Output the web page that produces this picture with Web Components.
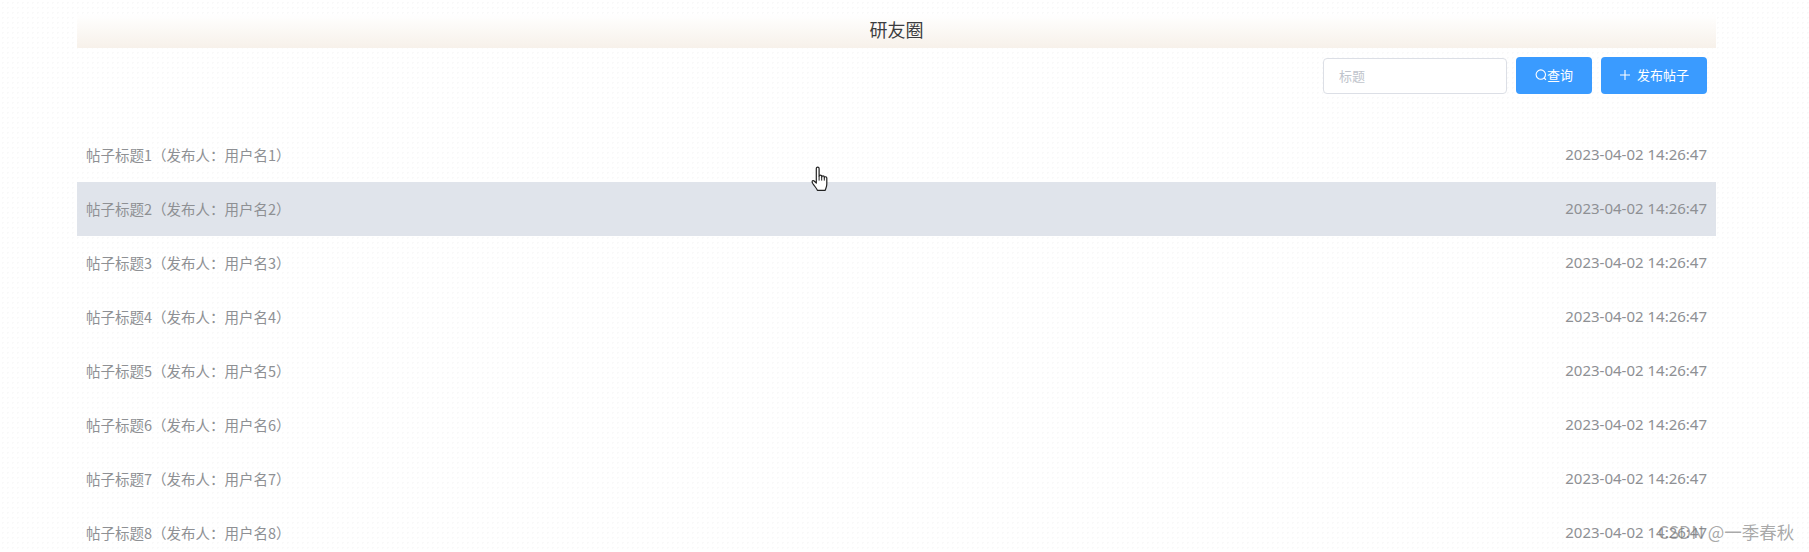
<!DOCTYPE html>
<html lang="zh">
<head>
<meta charset="utf-8">
<title>研友圈</title>
<style>
  html, body { margin: 0; height: 552px; overflow: hidden; background: #fff; }
  body { font-family: "Noto Sans CJK SC", "Liberation Sans", sans-serif; }
</style>
</head>
<body>
<forum-page>
  <forum-header>研友圈</forum-header>
  <forum-toolbar placeholder="标题"></forum-toolbar>
  <post-list></post-list>
</forum-page>
<hand-cursor></hand-cursor>
<water-mark>CSDN @一季春秋</water-mark>

<script>
class ForumPage extends HTMLElement {
  constructor() {
    super();
    this.attachShadow({ mode: 'open' });
    this.shadowRoot.innerHTML = `
      <style>
        :host {
          display: block;
          height: 552px;
          box-sizing: border-box;
          padding: 14px 93px 0 77px;
          overflow: hidden;
          background-color: #fff;
          background-image: radial-gradient(circle, #f9f9f9 1px, transparent 1px);
          background-size: 5px 5px;
        }
      </style>
      <slot></slot>
    `;
  }
}

class ForumHeader extends HTMLElement {
  constructor() {
    super();
    this.attachShadow({ mode: 'open' });
    this.shadowRoot.innerHTML = `
      <style>
        :host {
          display: flex;
          justify-content: center;
          align-items: center;
          height: 34px;
          padding-bottom: 4px;
          box-sizing: border-box;
          font-size: 18px;
          color: #3c3d40;
          background: linear-gradient(to bottom, #fff, #f7f1ea);
        }
      </style>
      <slot></slot>
    `;
  }
}

class ForumToolbar extends HTMLElement {
  constructor() {
    super();
    this.attachShadow({ mode: 'open' });
    this.shadowRoot.innerHTML = `
      <style>
        :host {
          display: flex;
          justify-content: flex-end;
          align-items: center;
          gap: 9px;
          height: 37px;
          margin-top: 9px;
          padding-right: 9px;
        }
        input {
          width: 184px;
          height: 36px;
          box-sizing: border-box;
          padding: 0 15px;
          border: 1px solid #dcdfe6;
          border-radius: 4px;
          background: #fff;
          font: 13px "Noto Sans CJK SC", sans-serif;
          outline: none;
        }
        input::placeholder { color: #c0c4cc; }
        button {
          display: flex;
          justify-content: center;
          align-items: center;
          height: 37px;
          padding: 0 0 2px;
          border: 0;
          border-radius: 4px;
          background: #3a9bff;
          color: #fff;
          font: 13px "Noto Sans CJK SC", sans-serif;
        }
        #search { width: 76px; gap: 0; }
        #add { width: 106px; gap: 6px; }
        svg { display: block; }
      </style>
      <input id="title" type="text">
      <button id="search">
        <svg width="12" height="12" viewBox="0 0 12 12" fill="none" stroke="#fff" stroke-width="1.1">
          <circle cx="5.8" cy="5.6" r="4.7"/>
          <path d="M9.2 9l1.8 1.9"/>
        </svg>
        <span>查询</span>
      </button>
      <button id="add">
        <svg width="12" height="12" viewBox="0 0 12 12" fill="none" stroke="#fff" stroke-width="1.1">
          <path d="M6 1v10M1 6h10"/>
        </svg>
        <span>发布帖子</span>
      </button>
    `;
    this.shadowRoot.getElementById('title').placeholder = this.getAttribute('placeholder');
  }
}

class PostRow extends HTMLElement {
  constructor() {
    super();
    this.attachShadow({ mode: 'open' });
    this.shadowRoot.innerHTML = `
      <style>
        :host {
          display: flex;
          justify-content: space-between;
          align-items: center;
          height: 54px;
          padding: 0 9px 2px;
          box-sizing: border-box;
          font-size: 14.5px;
          color: #8e9094;
        }
        :host([active]) { background: #e0e4eb; }
        .time { font: 15px "Noto Sans", sans-serif; }
      </style>
      <span><slot name="title"></slot></span>
      <span class="time"><slot name="time"></slot></span>
    `;
  }
}

class PostList extends HTMLElement {
  constructor() {
    super();
    this.attachShadow({ mode: 'open' });
    this.shadowRoot.innerHTML = `
      <style>
        :host { display: block; margin-top: 34px; }
      </style>
      <slot></slot>
    `;
  }

  connectedCallback() {
    for (let i = 1; i <= 8; i++) {
      const row = document.createElement('post-row');
      if (i === 2) row.setAttribute('active', '');
      row.innerHTML = `
        <span slot="title">帖子标题${i}（发布人：用户名${i}）</span>
        <span slot="time">2023-04-02 14:26:47</span>
      `;
      this.appendChild(row);
    }
  }
}

class HandCursor extends HTMLElement {
  constructor() {
    super();
    this.attachShadow({ mode: 'open' });
    this.shadowRoot.innerHTML = `
      <style>
        :host { position: absolute; left: 810px; top: 166px; width: 24px; height: 28px; }
        svg { display: block; }
      </style>
      <svg width="24" height="28" viewBox="0 0 24 28">
        <path d="M6.3 2.6c0-1.9 2.8-1.9 2.8 0v7.6c0-1.5 2.6-1.5 2.6 0v.8c0-1.5 2.6-1.5 2.6 0v.8c0-1.4 2.5-1.4 2.5 0.2v6c0 3-1 4.2-1.6 6.4H7.4c-.7-2.2-2.5-3.6-4.8-7.2-1.2-2-.1-3 1.2-2.4l2.5 2.2z"
          fill="#fff" stroke="#222" stroke-width="1.2" stroke-linejoin="round"/>
        <path d="M9.1 10.2v4.4M11.7 11v3.6M14.3 11.8v2.8" fill="none" stroke="#222" stroke-width="1"/>
      </svg>
    `;
  }
}

class WaterMark extends HTMLElement {
  constructor() {
    super();
    this.attachShadow({ mode: 'open' });
    this.shadowRoot.innerHTML = `
      <style>
        :host {
          position: absolute;
          left: 1658px;
          top: 520px;
          font-size: 17.5px;
          line-height: 24px;
          white-space: nowrap;
          color: rgba(120, 120, 120, 0.65);
        }
      </style>
      <slot></slot>
    `;
  }
}

customElements.define('forum-page', ForumPage);
customElements.define('forum-header', ForumHeader);
customElements.define('forum-toolbar', ForumToolbar);
customElements.define('post-row', PostRow);
customElements.define('post-list', PostList);
customElements.define('hand-cursor', HandCursor);
customElements.define('water-mark', WaterMark);
</script>
</body>
</html>
